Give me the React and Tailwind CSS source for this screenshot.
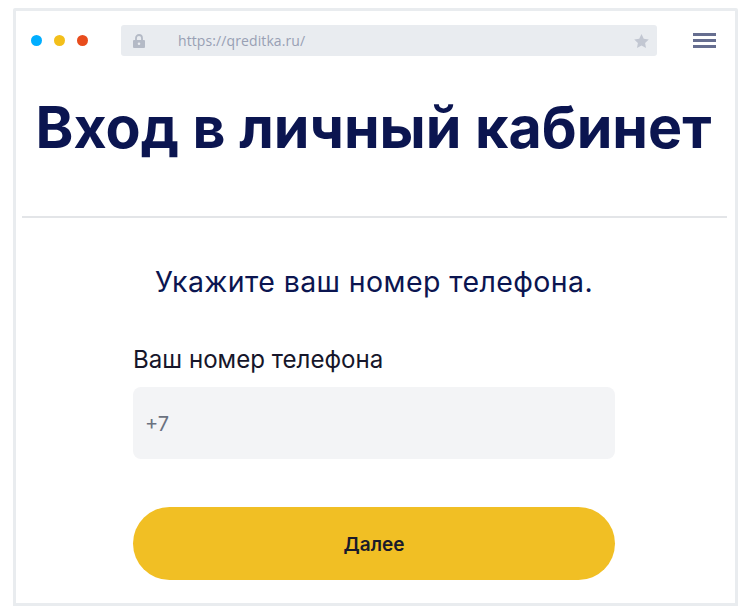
import React from 'react';

const LockIcon = () => (
    <svg width="12" height="14" viewBox="0 0 12 14" fill="none" xmlns="http://www.w3.org/2000/svg">
        <path d="M3 6V4a3 3 0 016 0v2" stroke="#b4bac6" strokeWidth="1.8" />
        <path fillRule="evenodd" d="M1 6h10a1 1 0 011 1v6a1 1 0 01-1 1H1a1 1 0 01-1-1V7a1 1 0 011-1zm5 2.5a1.3 1.3 0 100 2.6 1.3 1.3 0 000-2.6z" fill="#b4bac6" />
    </svg>
);

const StarIcon = () => (
    <svg width="15" height="14" viewBox="0 0 24 23" xmlns="http://www.w3.org/2000/svg">
        <path d="M12 0l3.7 7.8 8.3 1.1-6.1 5.9 1.5 8.2L12 19l-7.4 4 1.5-8.2L0 8.9l8.3-1.1z" fill="#c2c7d2" />
    </svg>
);

const App = () => {
    return (
        <div className="w-[751px] h-[606px] bg-white overflow-hidden" style={{ fontFamily: 'Inter, sans-serif' }}>
            <div className="ml-[13px] mt-[8px] w-[725px] h-[598px] border-[3px] border-[#e9ecef] rounded-tl-[2px] rounded-tr-[2px] flex flex-col">

                {/* Browser bar */}
                <div className="flex items-center h-[31px] mt-[14px] shrink-0">
                    <div className="flex items-center gap-[12px] ml-[15px]">
                        <span className="w-[11px] h-[11px] rounded-full bg-[#00aeff]"></span>
                        <span className="w-[11px] h-[11px] rounded-full bg-[#f3bf1a]"></span>
                        <span className="w-[11px] h-[11px] rounded-full bg-[#e84c1c]"></span>
                    </div>
                    <div className="flex items-center w-[536px] h-[31px] ml-[33px] rounded-[3px] bg-[#e9ecf0] pl-[12px] pr-[8px]">
                        <LockIcon />
                        <span className="ml-[33px] text-[14px] text-[#98a0b4] tracking-[0.1px]" style={{ fontFamily: '"Open Sans", sans-serif' }}>https://qreditka.ru/</span>
                        <span className="ml-auto flex"><StarIcon /></span>
                    </div>
                    <div className="flex flex-col gap-[3px] ml-[36px]">
                        <span className="block w-[23px] h-[3px] bg-[#666e90]"></span>
                        <span className="block w-[23px] h-[3px] bg-[#666e90]"></span>
                        <span className="block w-[23px] h-[3px] bg-[#666e90]"></span>
                    </div>
                </div>

                <h1 className="mt-[37px] pr-[4px] text-center text-[57.3px] leading-[68px] font-bold text-[#0b1550] whitespace-nowrap">
                    Вход в личный кабинет
                </h1>

                <div className="mt-[55px] ml-[6px] mr-[8px] h-[2px] bg-[#e3e5e8] shrink-0"></div>

                <p className="mt-[46px] pr-[3px] text-center text-[28.5px] leading-[36px] text-[#0b1550] tracking-[0.4px]">
                    Укажите ваш номер телефона.
                </p>

                <div className="ml-[117px] w-[482px] mt-[44px]">
                    <label className="block text-[24.1px] leading-[32px] text-[#16162a]">Ваш номер телефона</label>
                    <div className="flex items-center h-[72px] mt-[11px] px-[12px] pt-[1px] rounded-[8px] bg-[#f3f4f6] text-[20px] text-[#6b7280]">
                        +7
                    </div>
                    <button className="block w-full h-[73px] mt-[48px] pt-[3px] rounded-full bg-[#f1bf24] text-[19px] font-semibold text-[#1a1a2a]">
                        Далее
                    </button>
                </div>
            </div>
        </div>
    );
};

export default App;
